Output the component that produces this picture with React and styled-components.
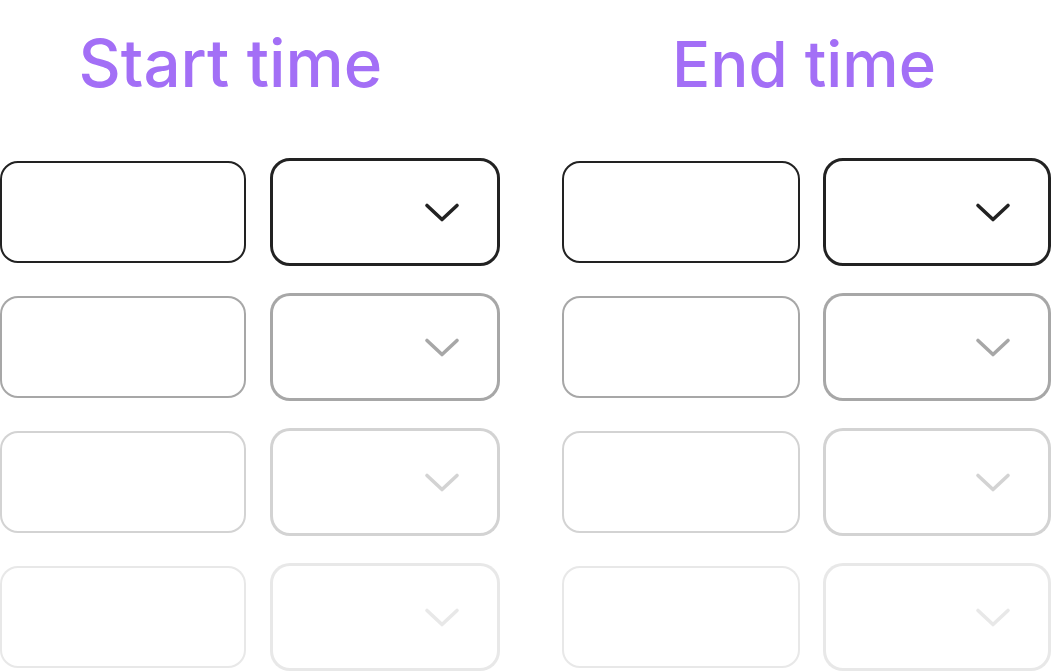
import React from "react";
import styled, { createGlobalStyle } from "styled-components";

const Global = createGlobalStyle`
  html, body { margin: 0; padding: 0; background: #ffffff; }
  body { font-family: Inter, "Noto Sans", sans-serif; overflow: hidden; }
`;

const Page = styled.div`
  width: 1051px;
  height: 671px;
  display: flex;
  gap: 62px;
  overflow: hidden;
`;

const Group = styled.section`
  display: flex;
  flex-direction: column;
`;

const Title = styled.h2`
  box-sizing: border-box;
  flex-shrink: 0;
  height: 144px;
  margin: 0;
  padding: ${(p) => p.$top}px 0 0 ${(p) => p.$indent}px;
  font-family: Inter, sans-serif;
  font-weight: 500;
  font-size: ${(p) => p.$size}px;
  line-height: ${(p) => p.$size}px;
  color: #a36ff6;
  letter-spacing: 0;
  white-space: nowrap;
`;

const Rows = styled.div`
  flex-shrink: 0;
  display: grid;
  grid-template-columns: ${(p) => p.$input}px ${(p) => p.$select}px;
  grid-auto-rows: 135px;
  column-gap: ${(p) => p.$gap}px;
  align-items: center;
`;

const Row = styled.div`
  display: contents;
`;

const InputBox = styled.div`
  box-sizing: border-box;
  height: 102px;
  border: 2.8px solid rgba(34, 34, 34, ${(p) => p.$alpha});
  border-radius: 18px;
  background: #fff;
`;

const SelectBox = styled.div`
  box-sizing: border-box;
  height: 108px;
  border: 3px solid rgba(34, 34, 34, ${(p) => p.$alpha});
  border-radius: 20px;
  background: #fff;
  display: flex;
  align-items: center;
  justify-content: flex-end;
  padding-right: 37px;
`;

const Chevron = ({ alpha }) => (
  <svg width="36" height="20" viewBox="0 0 36 20" fill="none">
    <path
      d="M3 3.5 L18 17.5 L33 3.5"
      stroke={`rgba(34,34,34,${alpha})`}
      strokeWidth="3.6"
      strokeLinecap="round"
      strokeLinejoin="round"
    />
  </svg>
);

const alphas = [1, 0.4, 0.2, 0.1];

const TimeGroup = ({ title, indent, size, top, input, select, gap }) => (
  <Group>
    <Title $indent={indent} $size={size} $top={top}>
      {title}
    </Title>
    <Rows $input={input} $select={select} $gap={gap}>
      {alphas.map((a, i) => (
        <Row key={i}>
          <InputBox $alpha={a} />
          <SelectBox $alpha={a}>
            <Chevron alpha={a} />
          </SelectBox>
        </Row>
      ))}
    </Rows>
  </Group>
);

export default function App() {
  return (
    <>
      <Global />
      <Page>
        <TimeGroup
          title="Start time"
          indent={78.5}
          size={65.5}
          top={31.4}
          input={246}
          select={230}
          gap={24}
        />
        <TimeGroup
          title="End time"
          indent={110}
          size={63.5}
          top={32.1}
          input={238}
          select={228}
          gap={23}
        />
      </Page>
    </>
  );
}
